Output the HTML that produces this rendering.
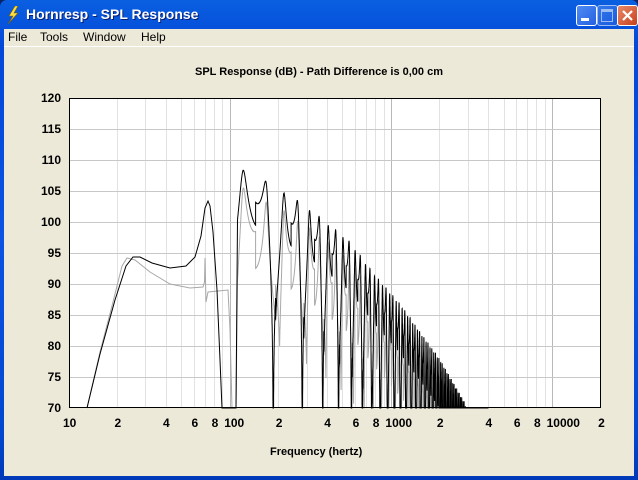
<!DOCTYPE html>
<html><head><meta charset="utf-8"><style>
html,body{margin:0;padding:0;width:638px;height:480px;overflow:hidden;background:#0a246a;font-family:"Liberation Sans",sans-serif}
#win{position:absolute;left:0;top:0;width:638px;height:480px;background:linear-gradient(#0a5fe0,#0348d8 10%,#0a53e3 50%,#0148d0 90%,#0039b8);border-radius:7px 7px 0 0}
#title{position:absolute;left:26px;top:6px;color:#fff;font-weight:bold;font-size:14px;text-shadow:1px 1px 0 #0a1e6e}
.btn{position:absolute;top:5px;width:19px;height:19px;border:1px solid #fff;border-radius:3px;background:linear-gradient(135deg,#4f8cf5,#2460e0)}
#client{position:absolute;left:4px;top:29px;width:630px;height:447px;background:#ece9d8}
#menu{position:absolute;left:0;top:0;width:630px;height:17px;font-size:12px;color:#000;border-bottom:1px solid #fff}
#menu span{position:absolute;top:1px}
.t{position:absolute;font-weight:bold;font-size:11px;color:#000;white-space:nowrap}
</style></head><body>
<div id="win">
<svg style="position:absolute;left:6px;top:6px" width="14" height="18" viewBox="0 0 14 18"><path d="M9 0 L3 10 L7 10 L2 18 L12 7 L8 7 L12 0Z" fill="#ffe040" stroke="#806000" stroke-width=".6"/></svg>
<div id="title">Hornresp - SPL Response</div>
<div class="btn" style="left:576px"><div style="position:absolute;left:4px;top:12px;width:8px;height:3px;background:#fff"></div></div>
<div class="btn" style="left:597px;opacity:.6"><div style="position:absolute;left:3px;top:3px;width:10px;height:9px;border:1px solid #fff;border-top-width:3px"></div></div>
<div class="btn" style="left:617px;background:linear-gradient(135deg,#e88a6a,#c8401c)"><svg width="19" height="19"><path d="M5 5L14 14M14 5L5 14" stroke="#fff" stroke-width="2.2"/></svg></div>
<div id="client">
<div id="menu"><span style="left:4px">File</span><span style="left:36px">Tools</span><span style="left:79px">Window</span><span style="left:137px">Help</span></div>
</div>
<svg id="plot" style="position:absolute;left:0;top:0" width="638" height="480"></svg>
<div class="t" style="left:0;width:638px;text-align:center;top:66px">SPL Response (dB) - Path Difference is 0,00 cm</div>
<div class="t" style="left:270px;top:446px">Frequency (hertz)</div>
<div id="lab"></div>
</div>
<script>
var L=69,R=601,T=98,B=408,D=161.2;
function X(f){return L+D*Math.log10(f/10);}
function Y(db){return B-(db-70)*6.2;}
var s='<rect x="'+L+'" y="'+T+'" width="'+(R-L)+'" height="'+(B-T)+'" fill="#fff"/>';
for(var d=10;d<=10000;d*=10)for(var k=1;k<10;k++){var x=X(d*k);if(x>=R)break;if(x>L)s+='<line x1="'+(x|0)+'.5" y1="'+T+'" x2="'+(x|0)+'.5" y2="'+B+'" stroke="'+(k==1?'#b8b8b8':'#e2e2e2')+'"/>';}
for(var i=1;i<10;i++){var y=T+31*i;s+='<line x1="'+L+'" y1="'+y+'.5" x2="'+R+'" y2="'+y+'.5" stroke="#c8c8c8"/>';}
function env(x){var p=[[200,104],[243,108.3],[285,104.5],[312,101.5],[350,96.5],[373,91.5],[400,86.5],[440,77.5],[465,70.5],[480,60]];
for(var i=0;i<p.length-1;i++){if(x<=p[i+1][0])return p[i][1]+(p[i+1][1]-p[i][1])*(x-p[i][0])/(p[i+1][0]-p[i][0]);}return 50;}
function curve(f,gray){var x=X(f),Pp=47.5,fp=120;
var q=gray?14:7;var r=-10*Math.log10(1+q*Math.pow(Math.sin(Math.PI*(f-fp)/Pp),2));
var fn=gray?60:42.5;var eps=gray?0.12:0.0;
var n=20*Math.log10(Math.abs(Math.cos(Math.PI*(f-fn)/95))+eps+1e-6);
var fk=fp+Pp*Math.round((f-fp)/Pp);var n0=20*Math.log10(Math.abs(Math.cos(Math.PI*(fk-fn)/95))+eps+1e-6);
return env(x)-(gray?3:0)+r+n-n0;}
function path(pre,f0,gray,col){var pts=pre.slice();
for(var f=f0;f<4000;f*=1.0008){var x=X(f);if(x>R)break;var db=curve(f,gray);var y=Math.min(B,Math.max(T,Y(db)));pts.push([x,y]);}
return '<polyline fill="none" stroke="'+col+'" stroke-width="1" points="'+pts.map(function(p){return p[0].toFixed(1)+','+p[1].toFixed(1)}).join(' ')+'"/>';}
var gpre=[[87,408],[100,352],[113,302],[122,266],[127,258],[135,260],[150,272],[170,284],[190,288],[203,287],[204.5,282],[205,258],[206,302],[208,292],[228,290],[230,330],[232,408],[236,408]];
var bpre=[[87,408],[100,354],[115,300],[126,266],[133,257],[140,257],[152,263],[170,268],[186,266],[195,257],[201,236],[205,208],[208,201],[210,206],[213,232],[217,290],[220,360],[222,408],[236,408]];
s+=path(gpre,111,true,'#a8a8a8');
s+=path(bpre,111,false,'#000');
s+='<rect x="'+L+'.5" y="'+T+'.5" width="'+(R-L-1)+'" height="'+(B-T-1)+'" fill="none" stroke="#000"/>';
document.getElementById('plot').innerHTML=s;
var h='';
for(var i=0;i<=10;i++){h+='<div class="t" style="left:30px;width:31px;text-align:right;top:'+(T+31*i-7)+'px;font-size:12px">'+(120-5*i)+'</div>';}
var xl=[[10,'10'],[20,'2'],[40,'4'],[60,'6'],[80,'8'],[100,'100'],[200,'2'],[400,'4'],[600,'6'],[800,'8'],[1000,'1000'],[2000,'2'],[4000,'4'],[6000,'6'],[8000,'8'],[10000,'10000'],[20000,'2']];
xl.forEach(function(a){var x=X(a[0]);var lft=a[1].length>1?x-6:x-3;h+='<div class="t" style="left:'+lft+'px;top:416px;font-size:12px">'+a[1]+'</div>';});
document.getElementById('lab').innerHTML=h;
</script>
</body></html>
